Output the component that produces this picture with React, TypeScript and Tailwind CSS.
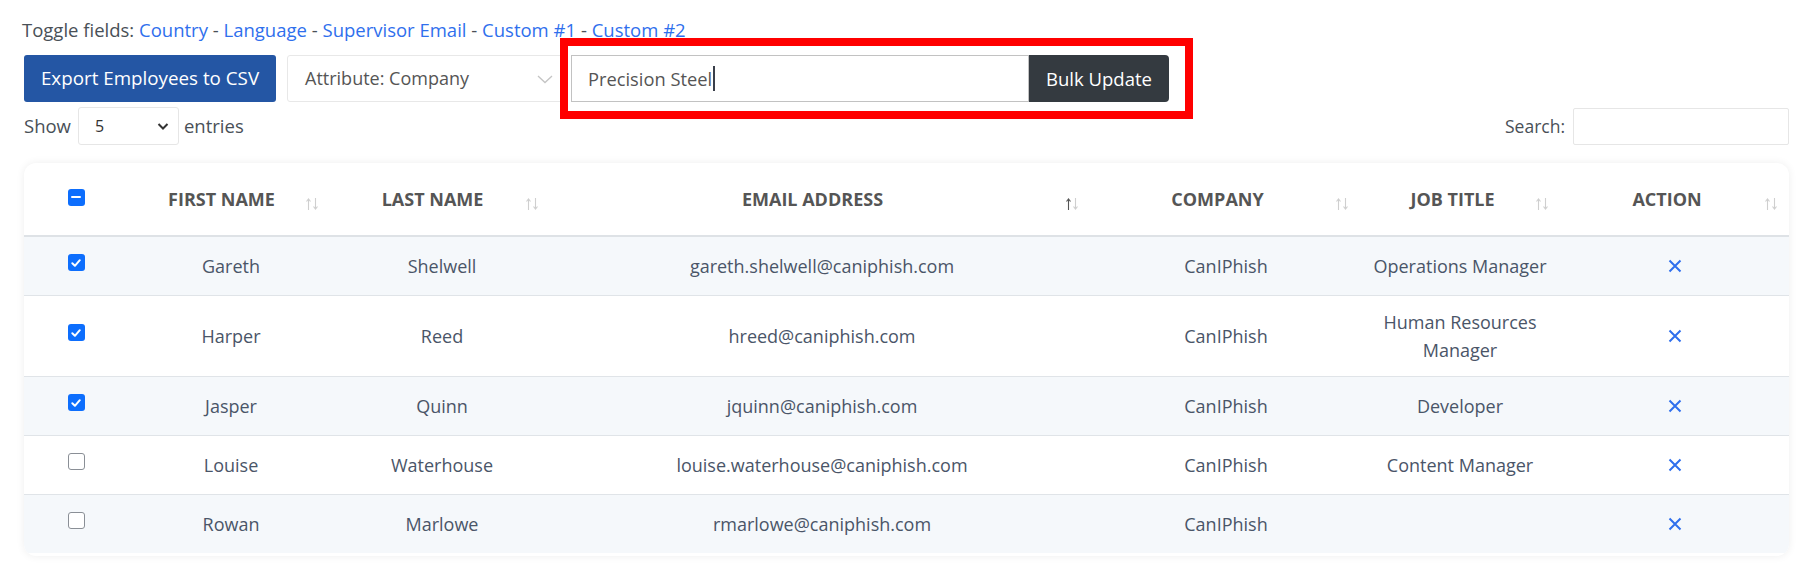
import React from "react";

const rows = [
  { c: "checked", f: "Gareth", l: "Shelwell", e: "gareth.shelwell@caniphish.com", co: "CanIPhish", j: ["Operations Manager"] },
  { c: "checked", f: "Harper", l: "Reed", e: "hreed@caniphish.com", co: "CanIPhish", j: ["Human Resources", "Manager"] },
  { c: "checked", f: "Jasper", l: "Quinn", e: "jquinn@caniphish.com", co: "CanIPhish", j: ["Developer"] },
  { c: "empty", f: "Louise", l: "Waterhouse", e: "louise.waterhouse@caniphish.com", co: "CanIPhish", j: ["Content Manager"] },
  { c: "empty", f: "Rowan", l: "Marlowe", e: "rmarlowe@caniphish.com", co: "CanIPhish", j: [] as string[] },
];

function SortIcon({ active }: { active?: boolean }) {
  return (
    <svg width="16" height="16" viewBox="0 0 16 16" className="shrink-0">
      <g stroke={active ? "#555" : "#cfcfcf"} strokeWidth="1.1" fill="none">
        <path d="M4.5 14 V3 M2.5 5.5 L4.5 3 L6.5 5.5" />
      </g>
      <g stroke="#cfcfcf" strokeWidth="1.1" fill="none">
        <path d="M11.5 2 V13 M9.5 10.5 L11.5 13 L13.5 10.5" />
      </g>
    </svg>
  );
}

function Check({ state }: { state: string }) {
  if (state === "empty") {
    return <span className="inline-block w-[17px] h-[17px] rounded-[3px] border border-[#8a8f96] bg-white" />;
  }
  return (
    <span className="inline-flex w-[17px] h-[17px] rounded-[3px] bg-[#0d6efd] items-center justify-center">
      {state === "checked" ? (
        <svg width="12" height="12" viewBox="0 0 12 12">
          <path d="M2.3 6.3 L4.9 8.8 L9.8 3.2" stroke="white" strokeWidth="2" fill="none" strokeLinecap="round" strokeLinejoin="round" />
        </svg>
      ) : (
        <span className="block w-[10px] h-[2.5px] bg-white rounded-[1px]" />
      )}
    </span>
  );
}

function Th({ label, active }: { label: string; active?: boolean }) {
  return (
    <th className="p-0 align-middle">
      <div className="flex items-center pl-[11px] pr-[10px]">
        <span className="flex-1 text-center">{label}</span>
        <span className="mt-[10px]"><SortIcon active={active} /></span>
      </div>
    </th>
  );
}

export default function App() {
  return (
    <div className="w-[1816px] h-[563px] bg-white pl-[24px] pr-[27px] pt-[17px] text-[#495057] font-['Open_Sans',sans-serif]">
      <div className="text-[18.5px] leading-[26px] -ml-[2px]">
        Toggle fields: <span className="text-[#2f6fed]">Country</span> - <span className="text-[#2f6fed]">Language</span> -{" "}
        <span className="text-[#2f6fed]">Supervisor Email</span> - <span className="text-[#2f6fed]">Custom #1</span> -{" "}
        <span className="text-[#2f6fed]">Custom #2</span>
      </div>

      <div className="flex items-center mt-[12px] h-[47px]">
        <button className="h-[47px] w-[252px] bg-[#2456a4] text-white text-[18.8px] rounded-[3px]">Export Employees to CSV</button>
        <div className="ml-[11px] h-[47px] w-[276px] border border-[#e8e8e8] rounded-[3px] flex items-center justify-between pl-[17px] pr-[8px] text-[18px] text-[#555]">
          <span>Attribute: Company</span>
          <svg width="18" height="12" viewBox="0 0 18 12"><path d="M2 3 L9 9.5 L16 3" stroke="#c4c4c4" strokeWidth="1.3" fill="none" /></svg>
        </div>
        <div className="relative ml-[8px] flex h-[47px]">
          <div className="absolute left-[-11px] top-[-17px] right-[-24px] bottom-[-17px] border-[8px] border-[#ff0000] pointer-events-none" />
          <div className="w-[458px] h-[47px] border border-[#c2c2c2] flex items-center pl-[16px] text-[18.3px] text-[#555]">
            Precision Steel<span className="inline-block w-[2px] h-[25px] bg-[#3a3f4a] ml-[1px]" />
          </div>
          <button className="w-[140px] h-[47px] bg-[#343a40] text-white text-[18.5px] rounded-r-[4px]">Bulk Update</button>
        </div>
      </div>

      <div className="flex items-center justify-between mt-[5px] h-[38px]">
        <div className="flex items-center text-[18.5px]">
          <span>Show</span>
          <div className="ml-[7px] w-[101px] h-[38px] border border-[#e6e6e6] rounded-[3px] flex items-center justify-between pl-[16px] pr-[8px] text-[16px] text-[#333]">
            <span>5</span>
            <svg width="14" height="10" viewBox="0 0 14 10"><path d="M2.5 3 L7 7.5 L11.5 3" stroke="#333" strokeWidth="2" fill="none" /></svg>
          </div>
          <span className="ml-[5px]">entries</span>
        </div>
        <div className="flex items-center text-[17.5px]">
          <span>Search:</span>
          <div className="ml-[8px] w-[216px] h-[37px] border border-[#e6e6e6] rounded-[2px]" />
        </div>
      </div>

      <div className="mt-[18px] w-[1765px] h-[393px] rounded-[12px] bg-white shadow-[0_0_8px_rgba(0,0,0,0.07)] overflow-hidden">
        <table className="w-full table-fixed border-collapse">
          <colgroup>
            <col className="w-[104px]" />
            <col className="w-[202px]" />
            <col className="w-[220px]" />
            <col className="w-[540px]" />
            <col className="w-[270px]" />
            <col className="w-[200px]" />
            <col className="w-[229px]" />
          </colgroup>
          <thead>
            <tr className="h-[73px] border-b-2 border-[#dee2e6] text-[18px] font-semibold text-[#555]">
              <th className="p-0 align-middle"><div className="flex justify-center -mt-[4px]"><Check state="indeterminate" /></div></th>
              <Th label="FIRST NAME" />
              <Th label="LAST NAME" />
              <Th label="EMAIL ADDRESS" active />
              <Th label="COMPANY" />
              <Th label="JOB TITLE" />
              <Th label="ACTION" />
            </tr>
          </thead>
          <tbody className="text-[18px] text-[#4a5568]">
            {rows.map((r, i) => (
              <tr key={i} className={`${i % 2 === 0 ? "bg-[#f5f8fb]" : "bg-white"} ${i < rows.length - 1 ? "border-b border-[#e0e4e8]" : ""}`}>
                <td className="h-[59px] py-[12px] align-middle text-center"><div className="flex justify-center -mt-[6px]"><Check state={r.c} /></div></td>
                <td className="py-[12px] pl-[4px] text-center leading-[28px]">{r.f}</td>
                <td className="py-[12px] pl-[4px] text-center leading-[28px]">{r.l}</td>
                <td className="py-[12px] pl-[4px] text-center leading-[28px]">{r.e}</td>
                <td className="py-[12px] pl-[2px] text-center leading-[28px]">{r.co}</td>
                <td className="py-[12px] text-center leading-[28px]">
                  {r.j.map((t, k) => (
                    <div key={k}>{t}</div>
                  ))}
                </td>
                <td className="py-[12px] text-center">
                  <div className="flex justify-center">
                    <svg width="16" height="16" viewBox="0 0 16 16"><path d="M2.5 2.5 L13.5 13.5 M13.5 2.5 L2.5 13.5" stroke="#2f6fed" strokeWidth="2" /></svg>
                  </div>
                </td>
              </tr>
            ))}
          </tbody>
        </table>
      </div>
    </div>
  );
}
